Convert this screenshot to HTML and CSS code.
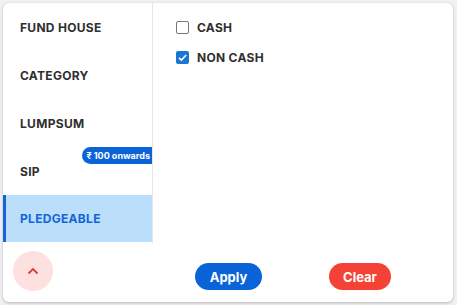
FILE: index.html
```html
<!DOCTYPE html>
<html lang="en">
<head>
    <meta charset="UTF-8">
    <meta name="viewport" content="width=device-width, initial-scale=1.0">
    <title>Filters</title>
    <link rel="stylesheet" href="styles.css">
</head>
<body>
    <div class="filter-card">
        <div class="filter-main">
            <ul class="filter-tabs">
                <li class="tab">FUND HOUSE</li>
                <li class="tab">CATEGORY</li>
                <li class="tab">LUMPSUM</li>
                <li class="tab">SIP <span class="badge">₹ 100 onwards</span></li>
                <li class="tab active">PLEDGEABLE</li>
            </ul>
            <div class="filter-options">
                <label class="option">
                    <span class="box"></span>
                    CASH
                </label>
                <label class="option">
                    <span class="box checked">
                        <svg viewBox="0 0 13 13" width="13" height="13"><path d="M3 6.8 L5.4 9.1 L10.2 4" fill="none" stroke="#fff" stroke-width="1.6"/></svg>
                    </span>
                    NON CASH
                </label>
            </div>
        </div>
        <div class="filter-footer">
            <button class="collapse">
                <svg viewBox="0 0 12 8" width="12" height="8"><path d="M1.5 6.5 L6 2 L10.5 6.5" fill="none" stroke="#e53935" stroke-width="1.8"/></svg>
            </button>
            <div class="actions">
                <button class="btn apply">Apply</button>
                <button class="btn clear">Clear</button>
            </div>
        </div>
    </div>
</body>
</html>
```

FILE: styles.css
```css
body {
    margin: 0;
    padding: 3px;
    background: #f1f1f5;
    font-family: Inter, Roboto, sans-serif;
}
.filter-card {
    width: 450px;
    height: 299px;
    background: #fff;
    border-radius: 6px;
    box-shadow: 0 1px 3px rgba(0,0,0,0.25);
    display: flex;
    flex-direction: column;
    overflow: hidden;
}
.filter-main {
    display: flex;
    height: 240px;
}
.filter-tabs {
    list-style: none;
    margin: 0;
    padding: 0;
    width: 149px;
    border-right: 1px solid #e6e6ea;
}
.tab {
    position: relative;
    height: 48px;
    display: flex;
    align-items: center;
    padding-left: 17px;
    font-size: 12px;
    font-weight: 700;
    color: #2f2f2f;
    letter-spacing: 0.3px;
}
.tab.active {
    background: #bbdefb;
    color: #1565d8;
    border-left: 3px solid #1565d8;
    padding-left: 14px;
    height: 47px;
}
.badge {
    position: absolute;
    top: 0;
    right: 0;
    height: 17px;
    padding: 0 2px 0 4px;
    display: flex;
    align-items: center;
    background: #0b63d8;
    color: #fff;
    font-size: 9px;
    font-weight: 700;
    letter-spacing: 0;
    border-radius: 9px 0 0 9px;
}
.filter-options {
    flex: 1;
    padding: 17px 0 0 23px;
    display: flex;
    flex-direction: column;
    gap: 16px;
}
.option {
    display: flex;
    align-items: center;
    gap: 8px;
    font-size: 12px;
    font-weight: 700;
    color: #2f2f2f;
    letter-spacing: 0.3px;
    height: 14px;
}
.box {
    width: 11px;
    height: 11px;
    border: 1px solid #777;
    border-radius: 2px;
    display: inline-block;
}
.box.checked {
    width: 13px;
    height: 13px;
    border: none;
    background: #1976d2;
}
.box svg {
    display: block;
}
.filter-footer {
    flex: 1;
    display: flex;
    align-items: center;
    padding: 0 10px;
}
.collapse {
    width: 40px;
    height: 40px;
    border-radius: 50%;
    border: none;
    background: #fde0e0;
    display: flex;
    align-items: center;
    justify-content: center;
    margin-top: -3px;
    padding: 0;
}
.actions {
    display: flex;
    gap: 67px;
    margin-left: 142px;
    margin-top: 8px;
}
.btn {
    height: 27px;
    border: none;
    border-radius: 14px;
    color: #fff;
    font-family: Inter, Roboto, sans-serif;
    font-size: 13px;
    font-weight: 700;
    padding: 0;
}
.apply {
    width: 67px;
    background: #0b63d8;
}
.clear {
    width: 62px;
    background: #f44336;
}
```
